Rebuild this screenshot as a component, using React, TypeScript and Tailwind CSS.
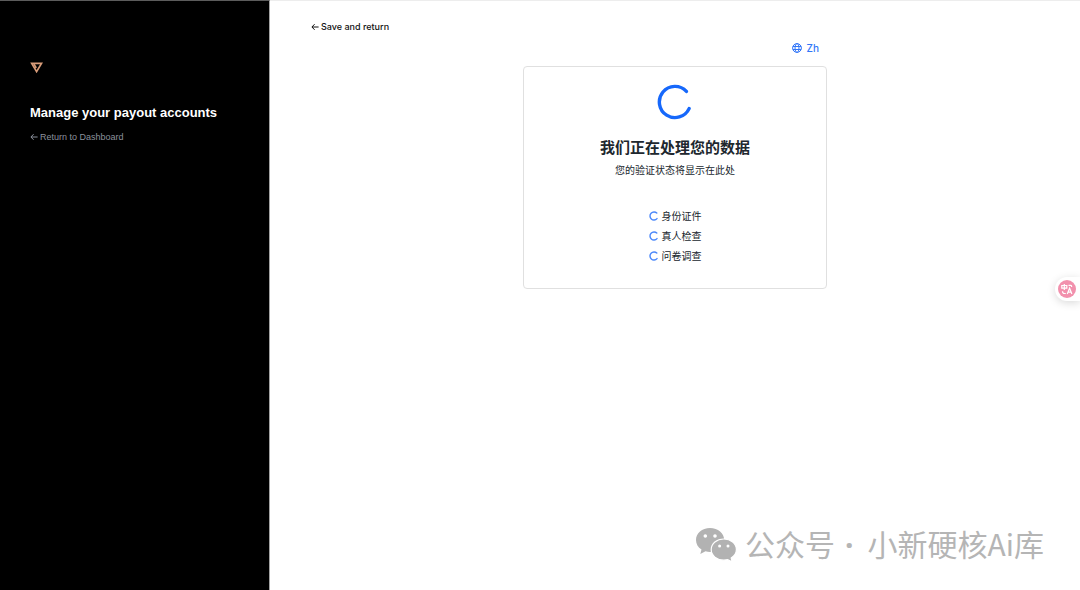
import clsx from 'clsx';

const CHECKS = ['身份证件', '真人检查', '问卷调查'];

function Spinner({ className }: { className?: string }) {
  return (
    <svg viewBox="0 0 36 36" fill="none" className={clsx('shrink-0', className)} aria-hidden="true">
      <path
        d="M29.4 7.4A15.6 15.6 0 1 0 32.1 24.6"
        stroke="currentColor"
        strokeWidth="3.4"
        strokeLinecap="round"
      />
    </svg>
  );
}

// The list rows use a shorter, heavier arc so it stays readable at 10px
function SmallSpinner() {
  return (
    <svg viewBox="0 0 10 10" fill="none" className="size-[10px] shrink-0 text-[#4a87fa]" aria-hidden="true">
      <path d="M7.8 2.1A4 4 0 1 0 8 7.6" stroke="currentColor" strokeWidth="1.4" strokeLinecap="round" />
    </svg>
  );
}

function ArrowLeft({ className }: { className?: string }) {
  return (
    <svg viewBox="0 0 8 8" fill="none" className={clsx('shrink-0', className)} aria-hidden="true">
      <path d="M7.6 4H1M3.6 1.2L.9 4l2.7 2.8" stroke="currentColor" />
    </svg>
  );
}

function Globe() {
  return (
    <svg viewBox="0 0 10 10" fill="none" stroke="currentColor" className="size-[10px]" aria-hidden="true">
      <circle cx="5" cy="5" r="4.4" />
      <ellipse cx="5" cy="5" rx="2" ry="4.4" />
      <path d="M.9 3.5h8.2M.9 6.5h8.2" />
    </svg>
  );
}

function Sidebar() {
  return (
    <aside className="w-1/4 shrink-0 border-t border-r border-t-[#5c5c5c] border-r-[#a3a3a3] bg-black px-[30px] pt-[61px] font-['Liberation_Sans',sans-serif]">
      <svg viewBox="0 0 12 11" className="h-[11px] w-[13px]" fill="none" aria-hidden="true">
        <path d="M1.2 1.4h9.8L6.1 9.6z" stroke="#d79b78" strokeWidth="1.7" />
        <path d="M3.4 1.8l2.3 4.2" stroke="#d79b78" strokeWidth="1.6" />
      </svg>
      <h1 className="mt-8 text-[13px] leading-4 font-semibold text-white">Manage your payout accounts</h1>
      <a href="#dashboard" className="mt-2 flex items-center gap-[2px] text-[9px] leading-4 text-[#8b919c]">
        <ArrowLeft className="size-[8px]" />
        Return to Dashboard
      </a>
    </aside>
  );
}

function StatusCard() {
  return (
    <section className="flex flex-col items-center rounded border border-[#e0e0e0] px-6 pt-[17px] pb-[22px] text-[#20272e]">
      <Spinner className="size-9 text-[#1668fb]" />
      <h2 className="mt-4 text-[15px] leading-6 font-bold">我们正在处理您的数据</h2>
      <p className="text-[10px] leading-5">您的验证状态将显示在此处</p>
      <ul className="mt-[26px] text-[10px] leading-5">
        {CHECKS.map((label) => (
          <li key={label} className="flex items-center gap-[3px]">
            <SmallSpinner />
            {label}
          </li>
        ))}
      </ul>
    </section>
  );
}

function WeChatMark() {
  return (
    <svg viewBox="0 0 42 34" className="h-[34px] w-[42px]" aria-hidden="true">
      <path
        d="M15 1C7 1 1 6.2 1 13c0 4 2 7.3 5.5 9.5L5.3 27l5.2-2.7c1.5.4 3 .6 4.5.6 8 0 14.2-5.3 14.2-11.9S23 1 15 1z"
        fill="#b2b2b2"
      />
      <path
        d="M28.8 12c-7 0-12.6 4.5-12.6 10.6 0 6 5.6 10.6 12.6 10.6 1.4 0 2.7-.2 3.9-.5l4.5 2.2-1-3.8c3.2-2 5.2-5 5.2-8.5C41.4 16.5 35.8 12 28.8 12z"
        fill="#b2b2b2"
        stroke="#fff"
        strokeWidth="1.2"
      />
      <g fill="#fff">
        <circle cx="10.3" cy="9" r="1.8" />
        <circle cx="20" cy="9" r="1.8" />
        <circle cx="24.6" cy="19" r="1.5" />
        <circle cx="33" cy="19" r="1.5" />
      </g>
    </svg>
  );
}

function TranslateButton() {
  return (
    <button
      type="button"
      aria-label="Translate"
      className="fixed top-[277px] right-0 flex h-6 w-[25px] items-center rounded-l-full bg-white pl-[3px] shadow-[0_2px_8px_rgba(0,0,0,0.15)]"
    >
      <svg viewBox="0 0 18 18" className="size-[18px]" fill="none" stroke="#fff" strokeWidth="1.2" aria-hidden="true">
        <circle cx="9" cy="9" r="9" fill="#f291ad" stroke="none" />
        <path d="M3.8 5.5h5v2.7h-5zM6.3 4v6M10.5 5.3h2.2q1 0 1 1.7M4.5 11.3q0 2.2 2 2.2h1.3" />
        <path d="M9.3 14l2.3-5.8 2.3 5.8M10.2 12.2h2.8" />
      </svg>
    </button>
  );
}

export default function App() {
  return (
    <div className="flex min-h-screen bg-white font-['Inter','Noto_Sans_CJK_SC',sans-serif]">
      <Sidebar />
      <main className="flex flex-1 flex-col border-t border-[#ededed]">
        <div className="flex px-[41px] pt-[18px]">
          <a href="#save" className="flex items-center gap-[2px] text-[9px] leading-4 font-medium text-[#111]">
            <ArrowLeft className="size-[8px]" />
            Save and return
          </a>
        </div>
        <div className="mx-auto mt-[5px] w-full max-w-[304px]">
          <div className="flex justify-end pr-2 pb-[10px]">
            <button type="button" className="flex items-center gap-[5px] text-[10px] leading-4 font-medium text-[#3276f8]">
              <Globe />
              Zh
            </button>
          </div>
          <StatusCard />
        </div>
        <footer className="mt-auto flex items-center justify-end gap-2 pr-9 pb-[25px] font-['Noto_Sans_CJK_SC',sans-serif] text-[30px] leading-10 text-[#b5b5b5]">
          <WeChatMark />
          <span>
            公众号
            <span className="mr-[14px] ml-[10px] font-['Noto_Sans',sans-serif] font-bold">·</span>
            小新硬核Ai库
          </span>
        </footer>
      </main>
      <TranslateButton />
    </div>
  );
}
